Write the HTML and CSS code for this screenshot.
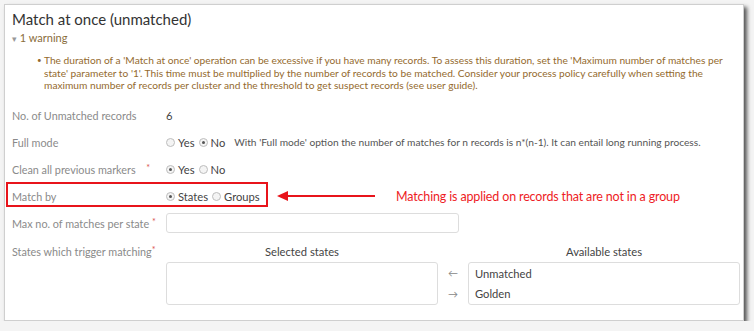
FILE: index.html
```html
<!DOCTYPE html>
<html lang="en">
<head>
<meta charset="UTF-8">
<title>Match at once (unmatched)</title>
<link rel="stylesheet" href="styles.css">
</head>
<body>

<div class="panel">
  <h1 class="title">Match at once (unmatched)</h1>

  <div class="warn-toggle"><span class="caret">&#9662;</span> 1 warning</div>
  <ul class="warn-list">
    <li>The duration of a 'Match at once' operation can be excessive if you have many records. To assess this duration, set the 'Maximum number of matches per state' parameter to '1'. This time must be multiplied by the number of records to be matched. Consider your process policy carefully when setting the maximum number of records per cluster and the threshold to get suspect records (see user guide).</li>
  </ul>

  <div class="form">
    <div class="row">
      <div class="label">No. of Unmatched records</div>
      <div class="value">6</div>
    </div>

    <div class="row">
      <div class="label">Full mode</div>
      <div class="value">
        <span class="radio"></span>Yes
        <span class="radio on"></span>No
        <span class="note">With 'Full mode' option the number of matches for n records is n*(n-1). It can entail long running process.</span>
      </div>
    </div>

    <div class="row">
      <div class="label">Clean all previous markers <span class="req req-far">*</span></div>
      <div class="value">
        <span class="radio on"></span>Yes
        <span class="radio"></span>No
      </div>
    </div>

    <div class="row">
      <div class="highlight"></div>
      <div class="label">Match by</div>
      <div class="value">
        <span class="radio on"></span>States
        <span class="radio"></span>Groups
      </div>
      <div class="callout">
        <div class="arrow"></div>
        <span class="callout-text">Matching is applied on records that are not in a group</span>
      </div>
    </div>

    <div class="row">
      <div class="label">Max no. of matches per state <span class="req">*</span></div>
      <div class="value"><div class="input"></div></div>
    </div>

    <div class="row row-top">
      <div class="label">States which trigger matching<span class="req">*</span></div>
      <div class="picker">
        <div class="pick-col">
          <div class="pick-head">Selected states</div>
          <div class="pick-box"></div>
        </div>
        <div class="pick-arrows">
          <span>&larr;</span>
          <span>&rarr;</span>
        </div>
        <div class="pick-col">
          <div class="pick-head">Available states</div>
          <div class="pick-box">
            <div class="pick-item">Unmatched</div>
            <div class="pick-item">Golden</div>
          </div>
        </div>
      </div>
    </div>
  </div>
</div>

</body>
</html>
```

FILE: styles.css
```css
body, html {
  margin: 0;
  padding: 0;
  background: #f4f4f4;
  font-family: Lato, "Liberation Sans", sans-serif;
}

.panel {
  margin: 4px 0 0 4px;
  width: 740px;
  height: 317px;
  background: #fff;
  border: 1px solid #cfcfcf;
  box-shadow: 3px 3px 4px rgba(0, 0, 0, 0.65);
  padding: 0 0 0 7px;
  box-sizing: border-box;
  overflow: hidden;
}

.title {
  margin: 5px 0 0 0;
  font-size: 15px;
  font-weight: normal;
  color: #333;
  line-height: 18px;
}

.warn-toggle {
  margin-top: 3px;
  font-size: 11px;
  color: #8a6d3b;
  line-height: 14px;
}

.caret {
  font-size: 9px;
  color: #999;
}

.warn-list {
  margin: 8px 0 0 0;
  padding: 0 6px 0 32px;
  font-size: 10.2px;
  line-height: 12.5px;
  color: #946a2e;
}

.warn-list li {
  list-style: none;
  position: relative;
}

.warn-list li::before {
  content: "\2022";
  position: absolute;
  left: -7px;
  font-size: 8px;
}

.form {
  margin-top: 10px;
}

.row {
  display: flex;
  align-items: center;
  height: 27px;
  font-size: 11.2px;
  position: relative;
}

.row-top {
  align-items: flex-start;
  height: auto;
}

.label {
  width: 154px;
  flex: none;
  color: #8a8a8a;
  line-height: 27px;
  font-size: 10.8px;
}

.row-top .label {
  line-height: 20px;
  margin-top: 5px;
}

.req {
  color: #d9534f;
  font-size: 9px;
  vertical-align: top;
  position: relative;
  top: -2px;
}

.req-far {
  margin-left: 8px;
}

.value {
  color: #444;
  display: flex;
  align-items: center;
}

.radio {
  display: inline-block;
  width: 7px;
  height: 7px;
  border: 1px solid #bdbdbd;
  border-radius: 50%;
  background: #f4f4f4;
  margin: 0 3px 0 0;
  position: relative;
}

.value .radio:not(:first-child) {
  margin-left: 4px;
}

.radio.on::after {
  content: "";
  position: absolute;
  left: 2px;
  top: 2px;
  width: 3px;
  height: 3px;
  border-radius: 50%;
  background: #555;
}

.note {
  margin-left: 9px;
  font-size: 10.2px;
  color: #555;
  white-space: nowrap;
}

.highlight {
  position: absolute;
  left: -6px;
  top: -1px;
  width: 258px;
  height: 21px;
  border: 2px solid #e8141b;
}

.callout {
  position: absolute;
  left: 268px;
  top: 6px;
  display: flex;
  align-items: center;
}

.arrow {
  width: 95px;
  height: 2px;
  background: #e8141b;
  position: relative;
}

.arrow::before {
  content: "";
  position: absolute;
  left: -3px;
  top: -4px;
  border-right: 11px solid #e8141b;
  border-top: 5px solid transparent;
  border-bottom: 5px solid transparent;
}

.callout-text {
  margin-left: 21px;
  font-size: 12.5px;
  color: #ee1c25;
  letter-spacing: -0.15px;
}

.input {
  width: 291px;
  height: 18px;
  border: 1px solid #ddd;
  border-radius: 3px;
}

.picker {
  display: flex;
  align-items: flex-end;
  margin-top: 8px;
}

.pick-col {
  width: 272px;
}

.pick-head {
  text-align: center;
  color: #444;
  font-size: 11.2px;
  line-height: 14px;
  margin-bottom: 3px;
}

.pick-box {
  height: 39px;
  border: 1px solid #ddd;
  border-radius: 3px;
  padding: 1px 6px;
}

.pick-item {
  color: #444;
  font-size: 11.2px;
  line-height: 20px;
}

.pick-arrows {
  width: 30px;
  display: flex;
  flex-direction: column;
  align-items: center;
  color: #888;
  font-size: 10px;
  line-height: 21px;
}
```
